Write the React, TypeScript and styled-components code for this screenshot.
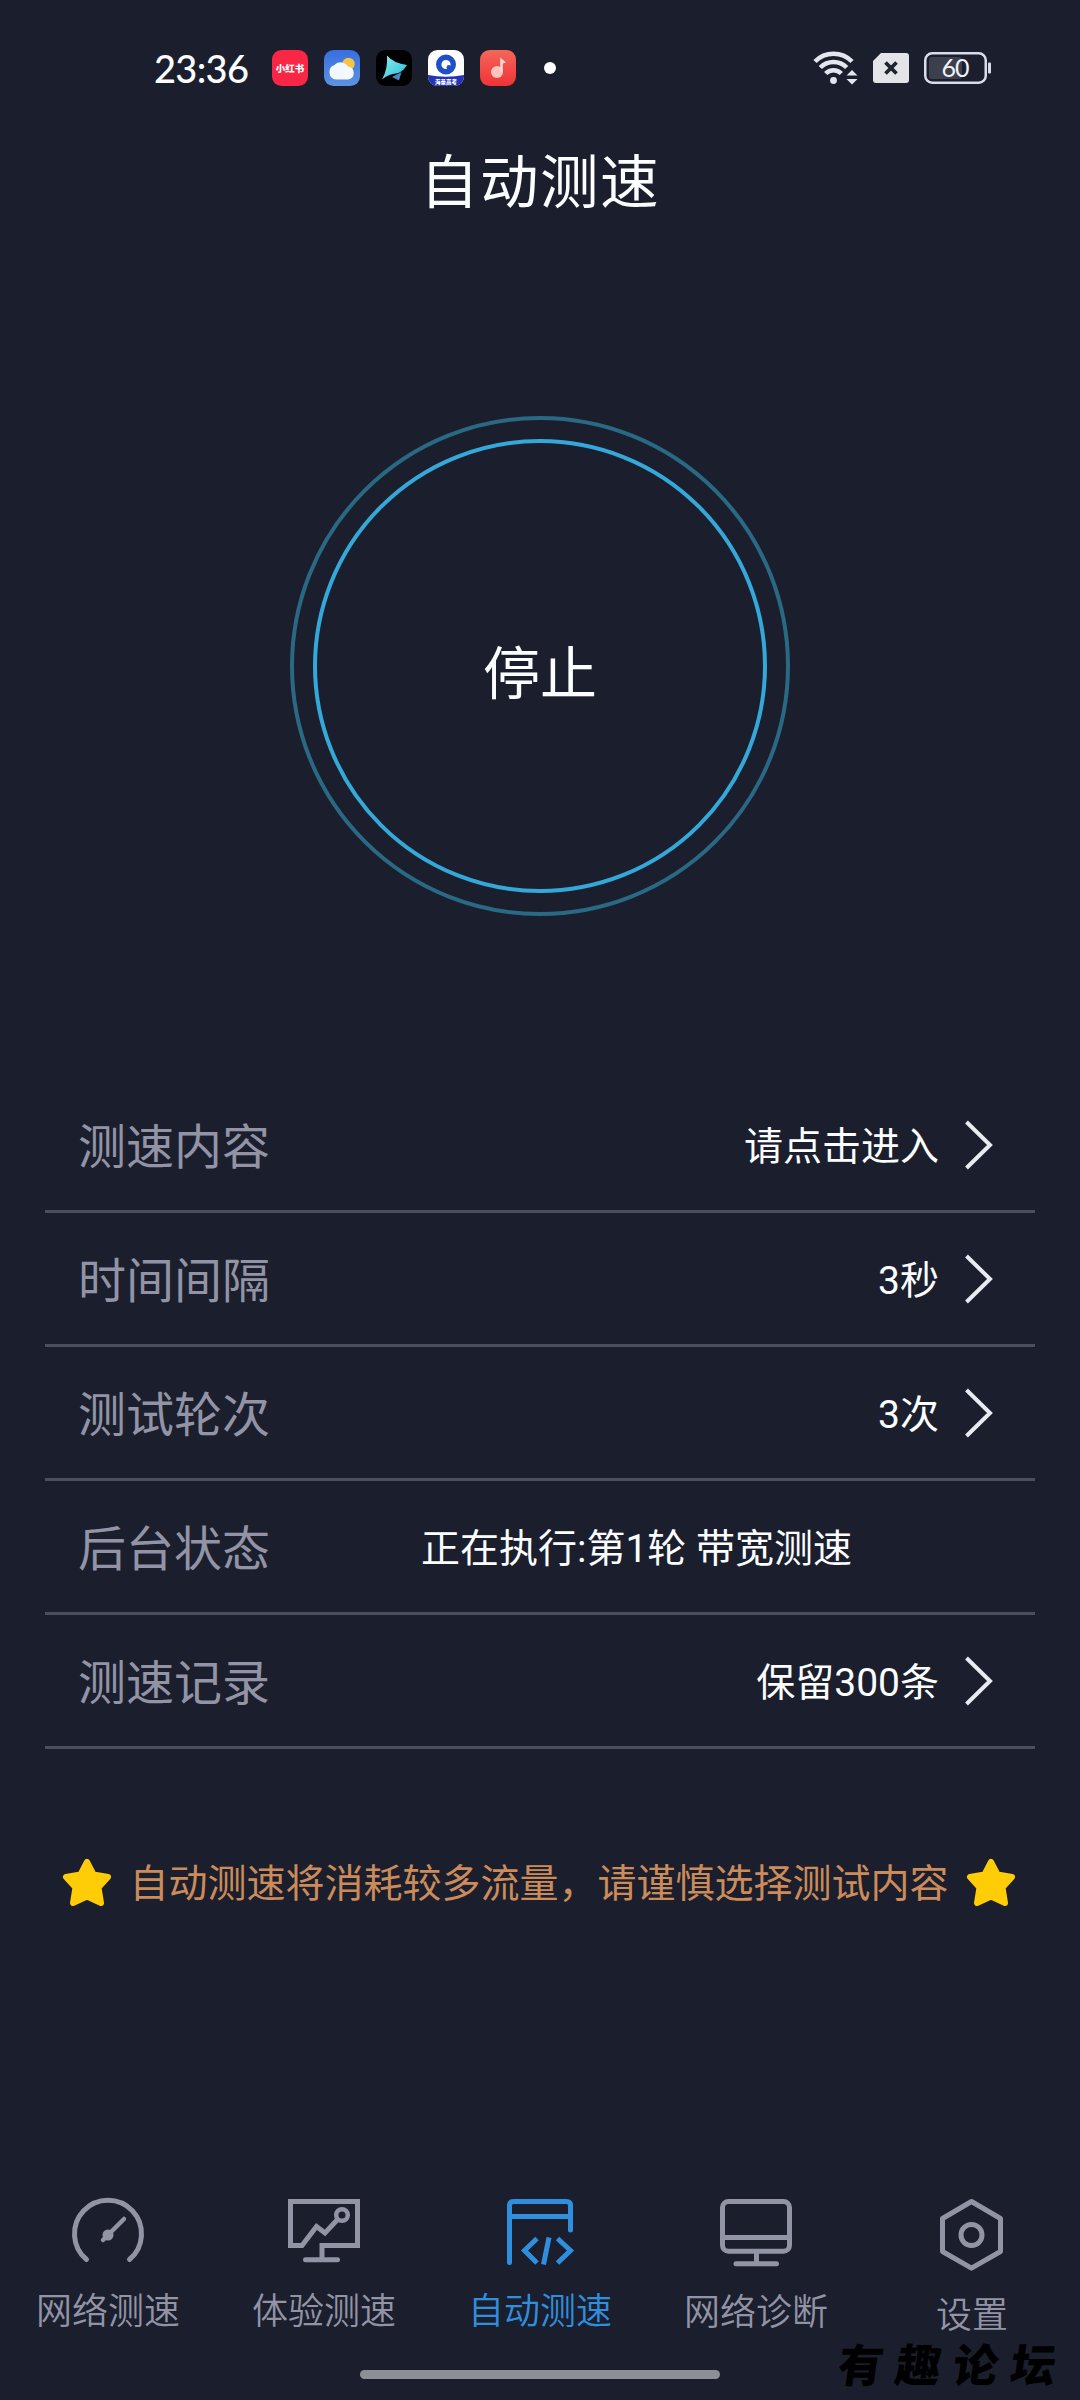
import React from "react";
import styled, { createGlobalStyle } from "styled-components";

const BG = "#1b1f2d";
const MUTED = "#9294a6";
const ACTIVE = "#2f8ede";

const Global = createGlobalStyle`
  * { box-sizing: border-box; }
  body {
    margin: 0;
    background: ${BG};
    font-family: Roboto, "Noto Sans CJK SC", sans-serif;
  }
`;

const Screen = styled.div`
  position: relative;
  width: 1080px;
  height: 2400px;
  overflow: hidden;
  display: flex;
  flex-direction: column;
  background: ${BG};
  color: #fbfdff;
`;

const StatusBar = styled.header`
  height: 110px;
  padding: 28px 89px 2px 154px;
  display: flex;
  align-items: center;
  justify-content: space-between;
`;

const StatusGroup = styled.div<{ $gap: number }>`
  display: flex;
  align-items: center;
  gap: ${(p) => p.$gap}px;
`;

const Clock = styled.time`
  width: 102px;
  font-family: Lato, sans-serif;
  font-size: 38px;
  font-weight: 500;
  line-height: 40px;
  letter-spacing: -0.7px;
  white-space: nowrap;
`;

const AppIcon = styled.svg`
  width: 36px;
  height: 36px;
  display: block;
`;

const MoreDot = styled.i`
  width: 12px;
  height: 12px;
  margin-left: 12px;
  border-radius: 50%;
  background: #fff;
`;

const Glyph = styled.svg`
  display: block;
  flex: none;
  overflow: visible;
`;

const TitleBar = styled.h1`
  margin: 0;
  height: 142px;
  padding-top: 2px;
  font-size: 58.5px;
  font-weight: 400;
  letter-spacing: 1.5px;
  line-height: 142px;
  text-align: center;
`;

const Stage = styled.section`
  height: 827px;
  padding-top: 164px;
  display: flex;
  justify-content: center;
  align-items: flex-start;
`;

const OuterRing = styled.div`
  width: 500px;
  height: 500px;
  padding: 19px;
  border: 4px solid #296984;
  border-radius: 50%;
`;

const StopButton = styled.button`
  width: 100%;
  height: 100%;
  padding: 6px 0 0;
  border: 4px solid #35a8da;
  border-radius: 50%;
  background: none;
  color: inherit;
  font: inherit;
  font-size: 57px;
`;

const List = styled.ul`
  margin: 0 45px;
  padding: 0;
  list-style: none;
`;

const Row = styled.li`
  height: 134px;
  padding: 0 42px 0 33px;
  display: flex;
  align-items: center;
  border-bottom: 3px solid #4b4e5d;
`;

const Label = styled.span`
  width: 202px;
  padding-top: 6px;
  color: ${MUTED};
  font-size: 48px;
  line-height: 70px;
  white-space: nowrap;
`;

const Value = styled.span<{ $centered?: boolean }>`
  flex: 1;
  font-size: 39px;
  line-height: 60px;
  padding-top: 5px;
  padding-right: ${(p) => (p.$centered ? 0 : 26)}px;
  text-align: ${(p) => (p.$centered ? "center" : "right")};
  white-space: pre;
`;

const Notice = styled.p`
  margin: 84px 0 0;
  height: 100px;
  padding-right: 2px;
  display: flex;
  align-items: center;
  justify-content: center;
  gap: 17px;
  color: #cb8b5a;
  font-size: 39px;
  white-space: nowrap;
`;

const NoticeText = styled.span`
  padding-bottom: 6px;
`;

const TabBar = styled.nav`
  margin-top: auto;
  height: 173px;
  display: grid;
  grid-template-columns: repeat(5, 216px);
`;

const Tab = styled.a<{ $active?: boolean }>`
  display: flex;
  flex-direction: column;
  align-items: center;
  color: ${(p) => (p.$active ? ACTIVE : MUTED)};
`;

const TabLabel = styled.span<{ $drop: number }>`
  margin-top: ${(p) => 12 + p.$drop}px;
  font-size: 36px;
  font-weight: 350;
  line-height: 54px;
`;

const HomeArea = styled.div`
  height: 30px;
  display: flex;
  justify-content: center;
`;

const HomeIndicator = styled.div`
  width: 360px;
  height: 9px;
  border-radius: 5px;
  background: #8c9096;
`;

const Watermark = styled.div`
  position: absolute;
  left: 838px;
  top: 2337px;
  color: #000;
  font-size: 45px;
  font-weight: 900;
  line-height: 60px;
  letter-spacing: 12.5px;
  white-space: nowrap;
  transform: skewX(-8deg);
`;

const Tiny = styled.text`
  font-family: "Noto Sans CJK SC", sans-serif;
  font-weight: 900;
`;

const Chevron = () => (
  <Glyph width="28" height="48" viewBox="0 0 28 48" fill="none" stroke="#e9ebf3" strokeWidth="4">
    <path d="M1.500 1 25 24 1.500 47" />
  </Glyph>
);

const Star = () => (
  <Glyph width="50" height="50" viewBox="0 0 50 50">
    <path
      d="M25 4 31.500 16.500 46 19 36.500 29.500 39 45 25 38.500 11 45 13.500 29.500 4 19 18.500 16.500Z"
      fill="#ffcd08"
      stroke="#ffcd08"
      strokeWidth="6"
      strokeLinejoin="round"
    />
  </Glyph>
);

const AppIcons = () => (
  <>
    <AppIcon viewBox="0 0 36 36">
      <rect width="36" height="36" rx="9.500" fill="#fa2645" />
      <Tiny x="18" y="21.500" fontSize="9.500" textAnchor="middle" fill="#fff">小红书</Tiny>
    </AppIcon>
    <AppIcon viewBox="0 0 36 36">
      <defs>
        <linearGradient id="sky" x1="0" y1="0" x2="0" y2="1">
          <stop stopColor="#376fe0" /><stop offset="1" stopColor="#5b94df" />
        </linearGradient>
      </defs>
      <rect width="36" height="36" rx="9.500" fill="url(#sky)" />
      <circle cx="24.500" cy="14" r="6.200" fill="#f6c544" />
      <path d="M12 29.500a7.500 7.500 0 0 1-1.600-14.500A8.600 8.600 0 0 1 24 16.500 6.600 6.600 0 0 1 24.500 29.500Z" fill="#f4f7fb" />
    </AppIcon>
    <AppIcon viewBox="0 0 36 36">
      <defs>
        <linearGradient id="wing" x1="0" y1="0" x2="1" y2="1">
          <stop stopColor="#8ef0ee" /><stop offset="1" stopColor="#25b9d9" />
        </linearGradient>
      </defs>
      <rect width="36" height="36" rx="9.500" fill="#000" />
      <path d="M11 5.500Q18 13.500 31 15 26 23 20 23.500 13 24 6 29.500 12 19 11 5.500Z" fill="url(#wing)" />
      <path d="M16 27 25.500 22 23 30.500Z" fill="#4c86c4" />
    </AppIcon>
    <AppIcon viewBox="0 0 36 36">
      <defs>
        <clipPath id="tile"><rect width="36" height="36" rx="9.500" /></clipPath>
      </defs>
      <g clipPath="url(#tile)">
        <rect width="36" height="36" fill="#fff" />
        <path d="M0 25Q18 28.500 36 25V36H0Z" fill="#2434b8" />
        <circle cx="18" cy="14.500" r="7.300" fill="none" stroke="#1f50c8" strokeWidth="5.400" />
        <circle cx="20.800" cy="17.300" r="2.200" fill="#1f50c8" />
        <Tiny x="18" y="33.500" fontSize="5.500" textAnchor="middle" fill="#fff">海量高考</Tiny>
      </g>
    </AppIcon>
    <AppIcon viewBox="0 0 36 36">
      <defs>
        <linearGradient id="music" x1="0" y1="0" x2="0" y2="1">
          <stop stopColor="#f4675a" /><stop offset="1" stopColor="#f03237" />
        </linearGradient>
      </defs>
      <rect width="36" height="36" rx="9.500" fill="url(#music)" />
      <circle cx="17" cy="22" r="6" fill="#fbc4bf" />
      <path d="M20.200 22V7.500L26 12.500 22.800 13.500V22Z" fill="#fcd6d2" />
    </AppIcon>
  </>
);

const Wifi = () => (
  <Glyph width="45" height="36" viewBox="0 0 45 36" fill="none" stroke="#e3e6ee" strokeWidth="4.600">
    <path d="M2 11.500A26 26 0 0 1 39 11.500" />
    <path d="M7.300 17.500A18.500 18.500 0 0 1 33.700 17.500" />
    <path d="M12.700 23.500A11 11 0 0 1 28.300 23.500" />
    <circle cx="20.500" cy="30.500" r="3.400" fill="#e3e6ee" stroke="none" />
    <path d="M39 20 44.500 25.500H33.500ZM39 34.500 44.500 29H33.500Z" fill="#e3e6ee" stroke="none" />
  </Glyph>
);

const Sim = () => (
  <Glyph width="36" height="30" viewBox="0 0 36 30">
    <path d="M8 0H33a3 3 0 0 1 3 3V27a3 3 0 0 1-3 3H3a3 3 0 0 1-3-3V8Z" fill="#e3e4e8" />
    <path d="M12.500 9.500 23.500 20.500M23.500 9.500 12.500 20.500" stroke="#20242f" strokeWidth="3.800" />
  </Glyph>
);

const Battery = () => (
  <Glyph width="67" height="32" viewBox="0 0 67 32">
    <rect x="5" y="5" width="33" height="22" rx="3" fill="#3c404c" />
    <rect x="1.250" y="1.250" width="60.500" height="29.500" rx="7" fill="none" stroke="#d9dcec" strokeWidth="2.500" />
    <rect x="64" y="10.500" width="3" height="11" rx="1" fill="#d9dcec" />
    <text x="31" y="25" textAnchor="middle" fontFamily="Lato, sans-serif" fontSize="25" letterSpacing="-1" fill="#f0f1f6">60</text>
  </Glyph>
);

const TabGlyph = ({ children }: { children: React.ReactNode }) => (
  <Glyph width="76" height="76" viewBox="0 0 76 76" fill="none" stroke="currentColor" strokeWidth="5" strokeLinecap="round" strokeLinejoin="round">
    {children}
  </Glyph>
);

const tabs = [
  {
    name: "网络测速",
    drop: 0,
    icon: (
      <>
        <path d="M16.500 62.500A33.500 33.500 0 1 1 59.500 62.500" />
        <circle cx="38" cy="38" r="5.500" fill="currentColor" stroke="none" />
        <path d="M33 43 54 22" strokeWidth="4.500" />
      </>
    ),
  },
  {
    name: "体验测速",
    drop: 0,
    icon: (
      <>
        <path d="M52.500 21.500 39 36 30.500 29.500 16 48.500H4.500V4.500H71.500V48.500H36V61" strokeLinejoin="miter" />
        <circle cx="56" cy="18" r="5.800" strokeWidth="4.500" fill={BG} />
        <path d="M19.500 62.800H51.500" />
      </>
    ),
  },
  {
    name: "自动测速",
    drop: 0,
    active: true,
    icon: (
      <>
        <path d="M7.500 65.500V8.500Q7.500 4.500 11.500 4.500H64.500Q68.500 4.500 68.500 8.500V33M7.500 19.500H68.500" />
        <path d="M35 41.500 22.500 53.500 35 66M47 40.500 41.500 67.500M55.500 41.500 68.500 53.500 55.500 66" strokeLinecap="butt" strokeLinejoin="miter" />
      </>
    ),
  },
  {
    name: "网络诊断",
    drop: 1,
    icon: (
      <>
        <rect x="4.500" y="4.500" width="67" height="49.700" rx="6" />
        <path d="M5 40.500H71M38.500 54.500V66M18 66.800H58.500" />
      </>
    ),
  },
  {
    name: "设置",
    drop: 4,
    icon: (
      <>
        <path d="M37.500 4.500 66.500 21.500V54.500L37.500 71.200 8.500 54.500V21.500Z" />
        <circle cx="37.500" cy="38" r="10.500" />
      </>
    ),
  },
];

const rows = [
  { label: "测速内容", value: "请点击进入" },
  { label: "时间间隔", value: "3秒" },
  { label: "测试轮次", value: "3次" },
  { label: "后台状态", value: "正在执行:第1轮 带宽测速", centered: true },
  { label: "测速记录", value: "保留300条" },
];

export default function App() {
  return (
    <Screen>
      <Global />
      <StatusBar>
        <StatusGroup $gap={16}>
          <Clock>23:36</Clock>
          <AppIcons />
          <MoreDot />
        </StatusGroup>
        <StatusGroup $gap={15}>
          <Wifi />
          <Sim />
          <Battery />
        </StatusGroup>
      </StatusBar>
      <TitleBar>自动测速</TitleBar>
      <Stage>
        <OuterRing>
          <StopButton>停止</StopButton>
        </OuterRing>
      </Stage>
      <List>
        {rows.map((r) => (
          <Row key={r.label}>
            <Label>{r.label}</Label>
            <Value $centered={r.centered}>{r.value}</Value>
            {!r.centered && <Chevron />}
          </Row>
        ))}
      </List>
      <Notice>
        <Star />
        <NoticeText>自动测速将消耗较多流量，请谨慎选择测试内容</NoticeText>
        <Star />
      </Notice>
      <TabBar>
        {tabs.map((t) => (
          <Tab key={t.name} $active={t.active}>
            <TabGlyph>{t.icon}</TabGlyph>
            <TabLabel $drop={t.drop}>{t.name}</TabLabel>
          </Tab>
        ))}
      </TabBar>
      <HomeArea>
        <HomeIndicator />
      </HomeArea>
      <Watermark>有趣论坛</Watermark>
    </Screen>
  );
}
